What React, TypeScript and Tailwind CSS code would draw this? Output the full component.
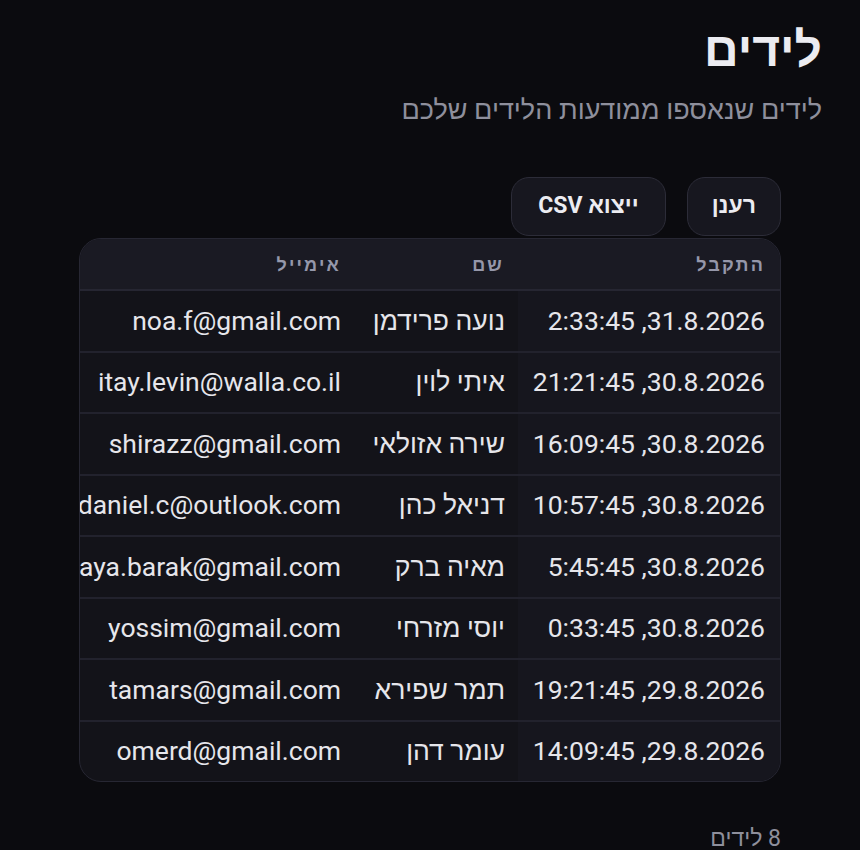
import React from 'react';

type Lead = { received: string; name: string; email: string };

const leads: Lead[] = [
  { received: '31.8.2026, 2:33:45', name: 'נועה פרידמן', email: 'noa.f@gmail.com' },
  { received: '30.8.2026, 21:21:45', name: 'איתי לוין', email: 'itay.levin@walla.co.il' },
  { received: '30.8.2026, 16:09:45', name: 'שירה אזולאי', email: 'shirazz@gmail.com' },
  { received: '30.8.2026, 10:57:45', name: 'דניאל כהן', email: 'daniel.c@outlook.com' },
  { received: '30.8.2026, 5:45:45', name: 'מאיה ברק', email: 'maya.barak@gmail.com' },
  { received: '30.8.2026, 0:33:45', name: 'יוסי מזרחי', email: 'yossim@gmail.com' },
  { received: '29.8.2026, 19:21:45', name: 'תמר שפירא', email: 'tamars@gmail.com' },
  { received: '29.8.2026, 14:09:45', name: 'עומר דהן', email: 'omerd@gmail.com' },
];

const App: React.FC = () => {
  return (
    <div
      dir="rtl"
      className="min-h-[850px] bg-[#0b0b0f] text-[#e6e6eb] px-[38px] pt-[20px] pb-4"
      style={{ fontFamily: 'Roboto, "Noto Sans", sans-serif' }}
    >
      <h1 className="text-[48px] font-bold leading-[60px] text-[#ececf1]">לידים</h1>
      <p className="mt-[13px] text-[27px] leading-[34px] text-[#8e8f9c]">לידים שנאספו ממודעות הלידים שלכם</p>

      <section className="px-[41px] mt-[50px]">
        <div className="flex gap-[21px]">
          <button className="h-[59px] px-[24px] rounded-[18px] border border-[#2c2c38] bg-[#17171f] text-[23px] font-bold text-[#ececf1]">
            רענן
          </button>
          <button className="h-[59px] px-[26px] rounded-[18px] border border-[#2c2c38] bg-[#17171f] text-[23px] font-bold text-[#ececf1]">
            ייצוא CSV
          </button>
        </div>

        <div className="mt-[2px] rounded-[22px] border border-[#272733] bg-[#131319] overflow-hidden">
          <table className="w-full table-fixed border-collapse">
            <colgroup>
              <col className="w-[262px]" />
              <col className="w-[168px]" />
              <col />
            </colgroup>
            <thead>
              <tr className="h-[51px] bg-[#1a1a23] border-b-2 border-[#262632]">
                <th className="pr-[15px] text-right text-[18px] font-bold tracking-[0.12em] text-[#9597aa]">התקבל</th>
                <th className="pr-[14px] text-right text-[18px] font-bold tracking-[0.12em] text-[#9597aa]">שם</th>
                <th className="pr-[9px] text-right text-[18px] font-bold tracking-[0.12em] text-[#9597aa]">אימייל</th>
              </tr>
            </thead>
            <tbody>
              {leads.map((l, i) => (
                <tr
                  key={l.email}
                  className={i < leads.length - 1 ? 'h-[61.5px] border-b-2 border-[#22222d]' : 'h-[60px]'}
                >
                  <td className="pr-[15px] bg-[#16161e] text-[26.5px] whitespace-nowrap text-right">
                    <span dir="ltr">{l.received.split(', ').reverse().join(' ,')}</span>
                  </td>
                  <td className="pr-[13px] text-[26.5px] whitespace-nowrap text-right">{l.name}</td>
                  <td className="pr-[9px] text-[26.5px] whitespace-nowrap text-right">{l.email}</td>
                </tr>
              ))}
            </tbody>
          </table>
        </div>

        <p className="mt-[44px] text-[23px] leading-[26px] text-[#8e8f9c]">8 לידים</p>
      </section>
    </div>
  );
};

export default App;
